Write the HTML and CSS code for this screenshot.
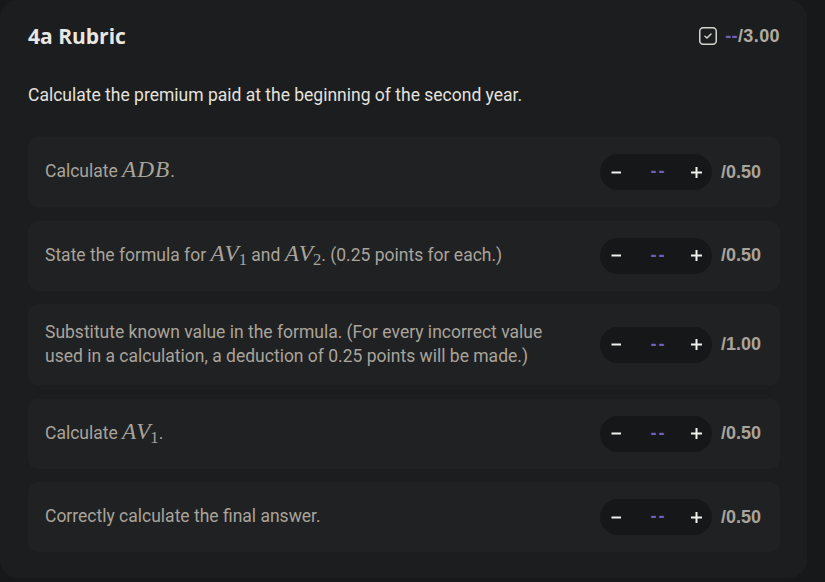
FILE: index.html
```html
<!DOCTYPE html>
<html lang="en">
<head>
<meta charset="utf-8">
<title>4a Rubric</title>
<link rel="stylesheet" href="styles.css">
</head>
<body>
<section class="panel">
  <header class="panel-head">
    <h2 class="title">4a Rubric</h2>
    <div class="total">
      <svg class="check" width="18" height="18" viewBox="0 0 18 18" aria-hidden="true">
        <rect x="0.75" y="0.75" width="16.5" height="16.5" rx="3.5" fill="none" stroke="#d6d4cf" stroke-width="1.5"/>
        <path d="M6 9.2 L8 11 L12 7" fill="none" stroke="#d6d4cf" stroke-width="1.5" stroke-linecap="round" stroke-linejoin="round"/>
      </svg>
      <span class="score"><span class="dash">--</span>/3.00</span>
    </div>
  </header>
  <p class="question">Calculate the premium paid at the beginning of the second year.</p>
  <ul class="rows">
    <li class="row">
      <div class="text">Calculate <span class="m">ADB</span>.</div>
      <div class="stepper">
        <svg class="btn" width="11" height="11" viewBox="0 0 11 11"><path d="M0.5 5.5 H10" stroke="#f2f1ee" stroke-width="2"/></svg>
        <span class="dash">--</span>
        <svg class="btn" width="11" height="11" viewBox="0 0 11 11"><path d="M0 5.5 H11 M5.5 0 V11" stroke="#f2f1ee" stroke-width="2"/></svg>
      </div>
      <div class="max">/0.50</div>
    </li>
    <li class="row">
      <div class="text">State the formula for <span class="m">AV</span><sub>1</sub> and <span class="m">AV</span><sub>2</sub>. (0.25 points for each.)</div>
      <div class="stepper">
        <svg class="btn" width="11" height="11" viewBox="0 0 11 11"><path d="M0.5 5.5 H10" stroke="#f2f1ee" stroke-width="2"/></svg>
        <span class="dash">--</span>
        <svg class="btn" width="11" height="11" viewBox="0 0 11 11"><path d="M0 5.5 H11 M5.5 0 V11" stroke="#f2f1ee" stroke-width="2"/></svg>
      </div>
      <div class="max">/0.50</div>
    </li>
    <li class="row">
      <div class="text">Substitute known value in the formula. (For every incorrect value used in a calculation, a deduction of 0.25 points will be made.)</div>
      <div class="stepper">
        <svg class="btn" width="11" height="11" viewBox="0 0 11 11"><path d="M0.5 5.5 H10" stroke="#f2f1ee" stroke-width="2"/></svg>
        <span class="dash">--</span>
        <svg class="btn" width="11" height="11" viewBox="0 0 11 11"><path d="M0 5.5 H11 M5.5 0 V11" stroke="#f2f1ee" stroke-width="2"/></svg>
      </div>
      <div class="max">/1.00</div>
    </li>
    <li class="row">
      <div class="text">Calculate <span class="m">AV</span><sub>1</sub>.</div>
      <div class="stepper">
        <svg class="btn" width="11" height="11" viewBox="0 0 11 11"><path d="M0.5 5.5 H10" stroke="#f2f1ee" stroke-width="2"/></svg>
        <span class="dash">--</span>
        <svg class="btn" width="11" height="11" viewBox="0 0 11 11"><path d="M0 5.5 H11 M5.5 0 V11" stroke="#f2f1ee" stroke-width="2"/></svg>
      </div>
      <div class="max">/0.50</div>
    </li>
    <li class="row">
      <div class="text">Correctly calculate the final answer.</div>
      <div class="stepper">
        <svg class="btn" width="11" height="11" viewBox="0 0 11 11"><path d="M0.5 5.5 H10" stroke="#f2f1ee" stroke-width="2"/></svg>
        <span class="dash">--</span>
        <svg class="btn" width="11" height="11" viewBox="0 0 11 11"><path d="M0 5.5 H11 M5.5 0 V11" stroke="#f2f1ee" stroke-width="2"/></svg>
      </div>
      <div class="max">/0.50</div>
    </li>
  </ul>
</section>
</body>
</html>
```
FILE: styles.css
```css
* { box-sizing: border-box; }
html, body { margin: 0; padding: 0; }
body {
  background: #171819;
  width: 825px;
  height: 582px;
  overflow: hidden;
  font-family: Roboto, "Liberation Sans", sans-serif;
}
.panel {
  width: 807px;
  height: 578px;
  background: #1c1d1f;
  border-radius: 18px;
  padding: 24px 27px 0 28px;
}
.panel-head {
  display: flex;
  align-items: center;
  justify-content: space-between;
  height: 24px;
}
.title {
  margin: 0;
  font-family: "Open Sans", Lato, sans-serif;
  font-weight: 700;
  font-size: 21px;
  color: #e9e7e3;
  line-height: 24px;
}
.total {
  display: flex;
  align-items: center;
  gap: 8px;
}
.check { display: block; }
.score {
  font-family: "Liberation Sans", Arial, sans-serif;
  font-weight: 700;
  font-size: 18px;
  letter-spacing: 0.4px;
  color: #b1aca3;
}
.dash { color: #7061b8; }
.question {
  margin: 35px 0 30px;
  font-size: 17.5px;
  line-height: 24px;
  color: #e4e2dd;
}
.rows {
  list-style: none;
  margin: 0;
  padding: 0;
  display: flex;
  flex-direction: column;
  gap: 13.5px;
}
.row {
  display: flex;
  align-items: center;
  background: #202123;
  border-radius: 10px;
  padding: 17px 18px 17px 17px;
  min-height: 70px;
}
.text {
  flex: 1;
  font-size: 17.5px;
  line-height: 23.5px;
  color: #a9a49b;
  padding-right: 40px;
}
.m {
  font-family: "Liberation Serif", "DejaVu Serif", serif;
  font-style: italic;
  font-size: 1.33em;
  line-height: 0;
  letter-spacing: 1px;
}
.text sub {
  font-family: "Liberation Serif", "DejaVu Serif", serif;
  font-size: 0.95em;
  vertical-align: -4px;
  line-height: 0;
  margin-left: -1px;
}
.stepper {
  display: flex;
  align-items: center;
  justify-content: space-between;
  width: 112px;
  height: 36px;
  flex-shrink: 0;
  border-radius: 18px;
  background: #161718;
  padding: 0 10px 0 11px;
}
.stepper .btn { display: block; }
.stepper .dash {
  font-family: "Liberation Sans", Arial, sans-serif;
  font-weight: 700;
  font-size: 18px;
  letter-spacing: 2px;
  line-height: 1;
  position: relative;
  top: -1px;
  left: 2px;
}
.max {
  width: 41px;
  flex-shrink: 0;
  margin-left: 9px;
  font-family: "Liberation Sans", Arial, sans-serif;
  font-weight: 700;
  font-size: 18px;
  color: #a9a49b;
  white-space: nowrap;
}
```
